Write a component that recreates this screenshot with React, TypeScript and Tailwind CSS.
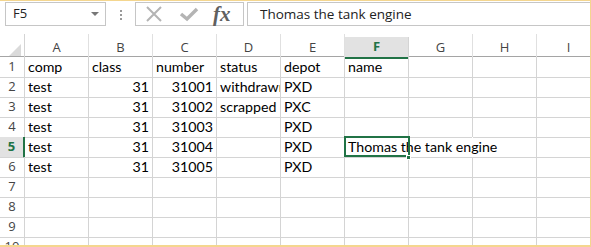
import React from 'react';

const cols = ['A', 'B', 'C', 'D', 'E', 'F', 'G', 'H', 'I'];

type Cell = { v: string; right?: boolean };

const data: Cell[][] = [
  [{ v: 'comp' }, { v: 'class' }, { v: 'number' }, { v: 'status' }, { v: 'depot' }, { v: 'name' }],
  [{ v: 'test' }, { v: '31', right: true }, { v: '31001', right: true }, { v: 'withdrawn' }, { v: 'PXD' }],
  [{ v: 'test' }, { v: '31', right: true }, { v: '31002', right: true }, { v: 'scrapped' }, { v: 'PXC' }],
  [{ v: 'test' }, { v: '31', right: true }, { v: '31003', right: true }, { v: '' }, { v: 'PXD' }],
  [{ v: 'test' }, { v: '31', right: true }, { v: '31004', right: true }, { v: '' }, { v: 'PXD' }, { v: 'Thomas the tank engine' }],
  [{ v: 'test' }, { v: '31', right: true }, { v: '31005', right: true }, { v: '' }, { v: 'PXD' }],
  [], [], [], [],
];

const cellFont = { fontFamily: 'Lato, "Liberation Sans", sans-serif' };
const uiFont = { fontFamily: '"Open Sans", "Noto Sans", sans-serif' };

function FormulaBar() {
  return (
    <div className="flex h-[33px] shrink-0 items-start pt-[1px]" style={uiFont}>
      {/* name box */}
      <div className="ml-[5px] flex h-[24px] w-[101px] items-center justify-between border border-[#c6c6c6] bg-white pl-[7px] pr-[6px]">
        <span className="text-[13px] text-[#222]">F5</span>
        <div className="h-0 w-0 border-x-[4px] border-t-[4px] border-x-transparent border-t-[#777]" />
      </div>
      {/* grip dots */}
      <div className="ml-[14px] mt-[8px] flex flex-col gap-[2px]">
        <div className="h-[2px] w-[2px] bg-[#999]" />
        <div className="h-[2px] w-[2px] bg-[#999]" />
        <div className="h-[2px] w-[2px] bg-[#999]" />
      </div>
      {/* cancel / enter / fx */}
      <div className="ml-[13px] flex h-[24px] w-[109px] items-center border border-[#c6c6c6] bg-white">
        <svg width="18" height="16" viewBox="0 0 18 16" className="ml-[9px]">
          <path d="M2 1 L16 15 M16 1 L2 15" stroke="#b4b4b4" strokeWidth="2" fill="none" />
        </svg>
        <svg width="20" height="16" viewBox="0 0 20 16" className="ml-[16px]">
          <path d="M2 8 L8 13 L18 3" stroke="#b4b4b4" strokeWidth="3.5" fill="none" />
        </svg>
        <span
          className="ml-[14px] text-[21px] font-bold italic leading-none text-[#606060]"
          style={{ fontFamily: '"Liberation Serif", "DejaVu Serif", serif' }}
        >
          fx
        </span>
      </div>
      {/* formula input */}
      <div className="ml-[3px] flex h-[24px] flex-1 items-center border border-r-0 border-[#c6c6c6] bg-white pl-[12px]">
        <span className="text-[13.5px] text-[#222]">Thomas the tank engine</span>
      </div>
    </div>
  );
}

function Header() {
  return (
    <div className="grid h-[23px] grid-cols-[25px_repeat(9,64px)] border-b border-[#a5a5a5]" style={uiFont}>
      <div className="relative border-r border-[#d4d4d4]">
        <div className="absolute bottom-[3px] right-[3px] h-0 w-0 border-b-[12px] border-l-[12px] border-b-[#dadada] border-l-transparent" />
      </div>
      {cols.map((c) =>
        c === 'F' ? (
          <div
            key={c}
            className="mt-[3px] flex items-center justify-center border-b-2 border-r border-b-[#217346] border-r-[#d4d4d4] bg-[#e2e2e2] text-[13px] font-bold text-[#217346]"
          >
            {c}
          </div>
        ) : (
          <div key={c} className="flex items-center justify-center border-r border-[#e0e0e0] pt-[3px] text-[13px] text-[#444]">
            {c}
          </div>
        ),
      )}
    </div>
  );
}

function Row({ n, cells }: { n: number; cells: Cell[] }) {
  const active = n === 5;
  return (
    <div className="grid h-[20px] grid-cols-[25px_repeat(9,64px)]">
      <div
        className={
          active
            ? 'flex items-center justify-center border-b border-r-2 border-b-[#d4d4d4] border-r-[#217346] bg-[#e2e2e2] text-[13px] font-bold text-[#217346]'
            : 'flex items-center justify-center border-b border-r border-[#d4d4d4] text-[13px] text-[#444]'
        }
        style={uiFont}
      >
        {n}
      </div>
      {cols.map((c, i) => {
        const cell = cells[i];
        const selected = active && c === 'F';
        const overflowed = active && (c === 'F' || c === 'G');
        return (
          <div
            key={c}
            className={`relative flex items-end border-b border-r border-[#d4d4d4] pb-[1px] text-[14.2px] leading-[18px] text-black ${
              overflowed ? 'border-r-white' : ''
            } ${selected ? 'z-10 overflow-visible' : 'overflow-hidden'} ${cell?.right ? 'justify-end pr-[3px]' : 'pl-[3px]'}`}
            style={cellFont}
          >
            <span className="whitespace-nowrap">{cell?.v}</span>
            {selected && (
              <>
                <div className="absolute -left-[1px] -top-[1px] h-[21px] w-[66px] border-2 border-[#217346]" />
                <div className="absolute -bottom-[3px] -right-[3px] h-[5px] w-[5px] border border-white bg-[#217346]" />
              </>
            )}
          </div>
        );
      })}
    </div>
  );
}

export default function App() {
  return (
    <div className="flex h-[247px] w-[591px] flex-col overflow-hidden border-b-2 border-r border-t border-[#f4d68f] bg-white">
      <FormulaBar />
      <div className="min-h-0 flex-1 overflow-hidden">
        <Header />
        {data.map((cells, i) => (
          <Row key={i} n={i + 1} cells={cells} />
        ))}
      </div>
    </div>
  );
}
